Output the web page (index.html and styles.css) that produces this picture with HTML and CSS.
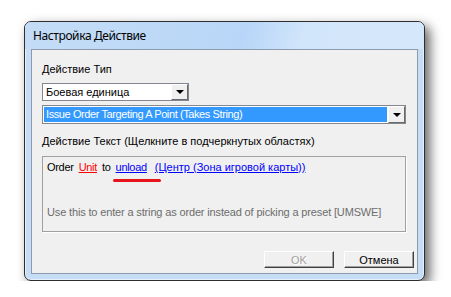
FILE: index.html
```html
<!DOCTYPE html>
<html lang="ru">
<head>
    <meta charset="UTF-8">
    <title>Настройка Действие</title>
    <link rel="stylesheet" href="styles.css">
</head>
<body>
    <div class="window">
        <div class="titlebar">Настройка Действие</div>
        <div class="client">
            <div class="label">Действие Тип</div>
            <div class="combo combo-short">
                <span class="combo-text">Боевая единица</span>
                <span class="drop-btn"><span class="arrow"></span></span>
            </div>
            <div class="combo combo-wide">
                <span class="combo-text selected">Issue Order Targeting A Point (Takes String)</span>
                <span class="drop-btn"><span class="arrow"></span></span>
            </div>
            <div class="label label-text">Действие Текст (Щелкните в подчеркнутых областях)</div>
            <div class="textbox">
                <div class="line">
                    <span class="latin">Order</span>
                    <span class="link red latin">Unit</span>
                    <span class="latin">to</span>
                    <span class="link blue latin">unload</span>
                    <span class="link blue far">(Центр (Зона игровой карты))</span>
                </div>
                <div class="hint">Use this to enter a string as order instead of picking a preset [UMSWE]</div>
                <span class="mark"></span>
            </div>
            <div class="footer">
                <button class="btn" disabled>OK</button>
                <button class="btn">Отмена</button>
            </div>
        </div>
    </div>
</body>
</html>
```

FILE: styles.css
```css
body {
  margin: 0;
  background: #fff;
  font-family: "Liberation Sans", Arial, sans-serif;
  font-size: 11px;
}

.window {
  margin: 21px 0 0 24px;
  width: 401px;
  height: 260px;
  box-sizing: border-box;
  border: 1px solid #2e2e2e;
  border-radius: 7px;
  padding: 0 6px 6px 6px;
  background: #c6ddf6;
  box-shadow: inset 0 0 0 1px rgba(255, 255, 255, 0.55), 5px 5px 12px rgba(0, 0, 0, 0.6);
}

.titlebar {
  height: 27px;
  margin: 0 -6px;
  padding-left: 8px;
  border-radius: 6px 6px 0 0;
  background: linear-gradient(105deg, #c4dcf6 0%, #bcd8f7 40%, #b8d6f8 55%, #d2e6fb 70%, #d5e8fb 100%);
  font-family: "Noto Sans", sans-serif;
  font-size: 12px;
  letter-spacing: -0.4px;
  line-height: 28px;
  color: #000;
}

.client {
  height: 225px;
  box-sizing: border-box;
  border: 1px solid #8d9bb0;
  background: #f0f0f0;
  padding: 13px 11px 0 10px;
}

.label {
  line-height: 13px;
}

.label-text {
  margin-top: 11px;
}

.combo {
  display: flex;
  height: 18px;
  box-sizing: border-box;
  border: 1px solid #828790;
  background: #fff;
  margin-top: 7px;
}

.combo-short {
  width: 147px;
}

.combo-wide {
  margin-top: 4px;
  height: 19px;
}

.combo-text {
  flex: 1;
  padding-left: 3px;
  line-height: 16px;
  white-space: nowrap;
  overflow: hidden;
}

.combo-text.selected {
  margin: 1px;
  padding-left: 2px;
  line-height: 15px;
  letter-spacing: -0.4px;
  background: #3399ff;
  color: #fff;
}

.drop-btn {
  width: 15px;
  display: flex;
  justify-content: center;
  align-items: center;
  background: #f0f0f0;
  border-top: 1px solid #fff;
  border-left: 1px solid #fff;
  border-right: 1px solid #696969;
  border-bottom: 1px solid #696969;
}

.arrow {
  width: 0;
  height: 0;
  border-left: 4px solid transparent;
  border-right: 4px solid transparent;
  border-top: 4px solid #000;
}

.textbox {
  position: relative;
  height: 76px;
  box-sizing: border-box;
  margin-top: 8px;
  border: 1px solid #a0a0a0;
  box-shadow: 1px 1px 0 #fff;
  padding: 4px 4px 0 4px;
}

.line {
  display: flex;
  gap: 5px;
  line-height: 13px;
}

.latin {
  letter-spacing: -0.3px;
}

.far {
  margin-left: 3px;
}

.link {
  text-decoration: underline;
}

.red {
  color: #ff0000;
}

.blue {
  color: #0000ff;
}

.hint {
  margin-top: 32px;
  line-height: 13px;
  letter-spacing: -0.15px;
  color: #6d6d6d;
}

.mark {
  position: absolute;
  left: 70px;
  top: 22px;
  width: 48px;
  height: 3px;
  border-radius: 2px;
  background: #e8141c;
}

.footer {
  display: flex;
  justify-content: flex-end;
  gap: 10px;
  margin-top: 19px;
  margin-right: -8px;
}

.btn {
  width: 70px;
  height: 17px;
  padding: 0;
  font-family: "Liberation Sans", Arial, sans-serif;
  font-size: 11px;
  background: #f0f0f0;
  color: #000;
  border-top: 1px solid #fff;
  border-left: 1px solid #fff;
  border-right: 1px solid #404040;
  border-bottom: 1px solid #404040;
  box-shadow: inset -1px -1px 0 #a0a0a0;
}

.btn:disabled {
  color: #a0a0a0;
  text-shadow: 1px 1px 0 #fff;
}
```
